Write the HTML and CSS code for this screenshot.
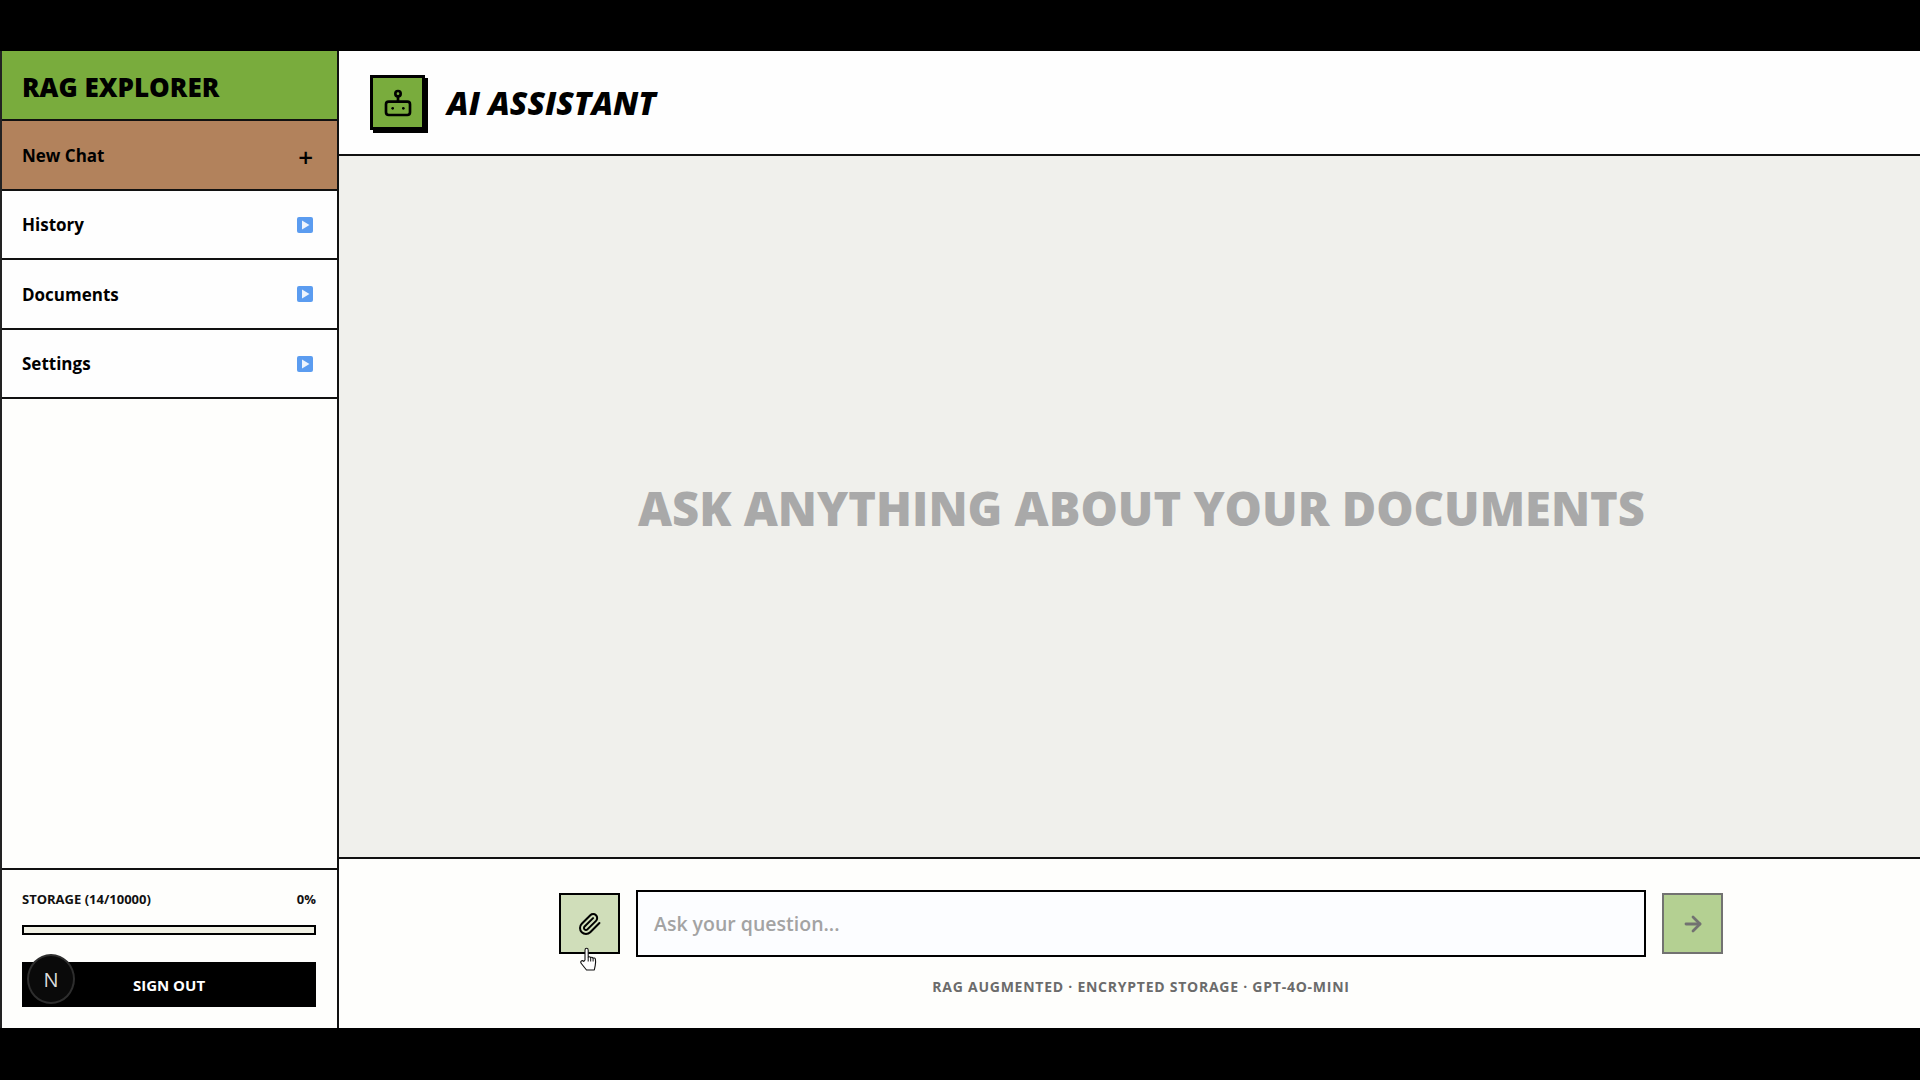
FILE: index.html
```html
<!DOCTYPE html>
<html lang="en">
<head>
    <meta charset="UTF-8" />
    <meta name="viewport" content="width=device-width, initial-scale=1.0" />
    <title>RAG Explorer</title>
    <link rel="stylesheet" href="styles.css">
</head>
<body>

<div class="app">
    <!-- Sidebar -->
    <aside class="sidebar">
        <div class="brand">RAG EXPLORER</div>
        <a class="nav-row nav-new"><span>New Chat</span><span class="plus">+</span></a>
        <a class="nav-row"><span>History</span>
            <svg class="play" viewBox="0 0 16 16"><rect width="16" height="16" rx="2" fill="#5b9cf0"/><path d="M5 3.5v9l7.5-4.5z" fill="#eef4fd"/></svg>
        </a>
        <a class="nav-row"><span>Documents</span>
            <svg class="play" viewBox="0 0 16 16"><rect width="16" height="16" rx="2" fill="#5b9cf0"/><path d="M5 3.5v9l7.5-4.5z" fill="#eef4fd"/></svg>
        </a>
        <a class="nav-row"><span>Settings</span>
            <svg class="play" viewBox="0 0 16 16"><rect width="16" height="16" rx="2" fill="#5b9cf0"/><path d="M5 3.5v9l7.5-4.5z" fill="#eef4fd"/></svg>
        </a>

        <div class="sidebar-foot">
            <div class="storage-label"><span>STORAGE (14/10000)</span><span>0%</span></div>
            <div class="storage-bar"></div>
            <button class="sign-out">SIGN OUT</button>
            <div class="dev-badge">N</div>
        </div>
    </aside>

    <!-- Main -->
    <main class="main">
        <header class="topbar">
            <div class="bot-box">
                <svg viewBox="0 0 24 24" width="32" height="32" fill="none" stroke="#000" stroke-width="2" stroke-linecap="round" stroke-linejoin="round"><rect width="18" height="10" x="3" y="11" rx="2"/><circle cx="12" cy="5" r="2"/><path d="M12 7v4"/><line x1="8" x2="8" y1="16" y2="16"/><line x1="16" x2="16" y1="16" y2="16"/></svg>
            </div>
            <h1>AI ASSISTANT</h1>
        </header>

        <section class="chat-empty">
            <h2>ASK ANYTHING ABOUT YOUR DOCUMENTS</h2>
        </section>

        <footer class="composer">
            <div class="composer-row">
                <button class="square-btn attach">
                    <svg viewBox="0 0 24 24" width="24" height="24" fill="none" stroke="#000" stroke-width="2" stroke-linecap="round" stroke-linejoin="round"><path d="m21.44 11.05-9.19 9.19a6 6 0 0 1-8.49-8.49l8.57-8.57A4 4 0 1 1 18 8.84l-8.59 8.57a2 2 0 0 1-2.83-2.83l8.49-8.48"/></svg>
                </button>
                <div class="question">Ask your question...</div>
                <button class="square-btn send">
                    <svg viewBox="0 0 24 24" width="24" height="24" fill="none" stroke="#000" stroke-width="2.8" stroke-linecap="round" stroke-linejoin="round"><path d="M5 12h14"/><path d="m12 5 7 7-7 7"/></svg>
                </button>
            </div>
            <p class="caption">RAG AUGMENTED · ENCRYPTED STORAGE · GPT-4O-MINI</p>

            <!-- Mouse pointer -->
            <svg class="pointer" viewBox="0 0 20 26" width="20" height="26"><path d="M6 13V3.2C6 2 6.8 1.3 7.6 1.3S9.2 2 9.2 3.2V10l.2-.1c.9-.3 1.8-.2 2.2.6.9-.4 1.9-.2 2.3.6 1-.4 2.2 0 2.5 1 .3 1.5.2 4.5-.2 6.5l-.9 4.4H7.5L2.3 16.5c-.8-1-.7-2 0-2.5.8-.6 1.8-.3 2.5.4z" fill="#fff" stroke="#111" stroke-width="1.1" stroke-linejoin="round"/><path d="M9.2 10v4.5M11.7 10.5v4M14.1 11v3.5" stroke="#111" stroke-width="1" fill="none"/></svg>
        </footer>
    </main>
</div>

</body>
</html>
```
FILE: styles.css
```css
* {
    box-sizing: border-box;
}
body {
    margin: 0;
    height: 100vh;
    background-color: #000;
    padding: 51px 0 52px;
    font-family: 'Open Sans', 'Noto Sans', sans-serif;
    color: #000;
}
.app {
    display: flex;
    height: 100%;
    background-color: #fefefc;
}
.sidebar {
    width: 339px;
    flex-shrink: 0;
    display: flex;
    flex-direction: column;
    border-left: 2px solid #222;
    border-right: 2px solid #111;
}
.brand {
    height: 70px;
    padding: 3px 20px 0;
    display: flex;
    align-items: center;
    background-color: #79ac3d;
    border-bottom: 2px solid #111;
    font-size: 26px;
    font-weight: 800;
}
.nav-row {
    height: 69.5px;
    padding: 1px 24px 0 20px;
    display: flex;
    align-items: center;
    justify-content: space-between;
    border-bottom: 2px solid #111;
    font-size: 17px;
    font-weight: 700;
    background-color: #fefefe;
}
.nav-new {
    background-color: #b2825c;
}
.plus {
    font-size: 26px;
    font-weight: 600;
    line-height: 1;
    padding-top: 4px;
}
.play {
    width: 16px;
    height: 16px;
}
.sidebar-foot {
    position: relative;
    margin-top: auto;
    height: 160px;
    padding: 20px 21px 0 20px;
    border-top: 2px solid #111;
}
.storage-label {
    display: flex;
    justify-content: space-between;
    font-size: 13px;
    font-weight: 700;
    line-height: 18px;
    color: #111;
}
.storage-bar {
    height: 10px;
    margin-top: 17px;
    border: 2px solid #000;
    background-color: #f0f0e4;
}
.sign-out {
    display: block;
    width: 100%;
    height: 45px;
    margin-top: 27px;
    border: none;
    background-color: #000;
    color: #fff;
    font-family: inherit;
    font-size: 15px;
    font-weight: 700;
}
.dev-badge {
    position: absolute;
    left: 25px;
    top: 84px;
    width: 48px;
    height: 50px;
    border-radius: 50%;
    background-color: #0a0a0a;
    border: 2px solid #2e2e2e;
    color: #ddd;
    font-size: 20px;
    display: flex;
    align-items: center;
    justify-content: center;
}
.main {
    flex: 1;
    min-width: 0;
    display: flex;
    flex-direction: column;
}
.topbar {
    height: 105px;
    flex-shrink: 0;
    padding: 0 0 0 31px;
    display: flex;
    align-items: center;
    gap: 22px;
    border-bottom: 2px solid #111;
    background-color: #fefefe;
}
.bot-box {
    width: 55px;
    height: 55px;
    display: flex;
    align-items: center;
    justify-content: center;
    background-color: #79ac3d;
    border: 3px solid #000;
    box-shadow: 3px 3px 0 #000;
}
.topbar h1 {
    margin: 0;
    font-size: 32px;
    font-weight: 800;
    font-style: italic;
}
.chat-empty {
    flex: 1;
    padding: 2px 0 0 24px;
    display: flex;
    align-items: center;
    justify-content: center;
    background-color: #f0f0ec;
}
.chat-empty h2 {
    margin: 0;
    font-size: 47px;
    font-weight: 800;
    color: #a9a9a9;
}
.composer {
    position: relative;
    height: 171px;
    flex-shrink: 0;
    padding: 31px 197px 0 220px;
    border-top: 2px solid #111;
}
.composer-row {
    display: flex;
    align-items: center;
    gap: 16px;
}
.square-btn {
    width: 61px;
    height: 61px;
    flex-shrink: 0;
    padding: 0;
    display: flex;
    align-items: center;
    justify-content: center;
    border: 2px solid #000;
}
.attach {
    background-color: #d0deba;
}
.send {
    background-color: #79ac3d;
    opacity: 0.55;
}
.question {
    flex: 1;
    height: 67px;
    padding: 0 16px;
    display: flex;
    align-items: center;
    border: 2px solid #000;
    background-color: #fcfdff;
    color: #a3a3a3;
    font-size: 19.5px;
    font-weight: 600;
}
.caption {
    margin: 20px 0 0;
    text-align: center;
    font-size: 14px;
    font-weight: 700;
    letter-spacing: 0.75px;
    color: #6b6b6b;
}
.pointer {
    position: absolute;
    left: 240px;
    top: 88px;
}
```
